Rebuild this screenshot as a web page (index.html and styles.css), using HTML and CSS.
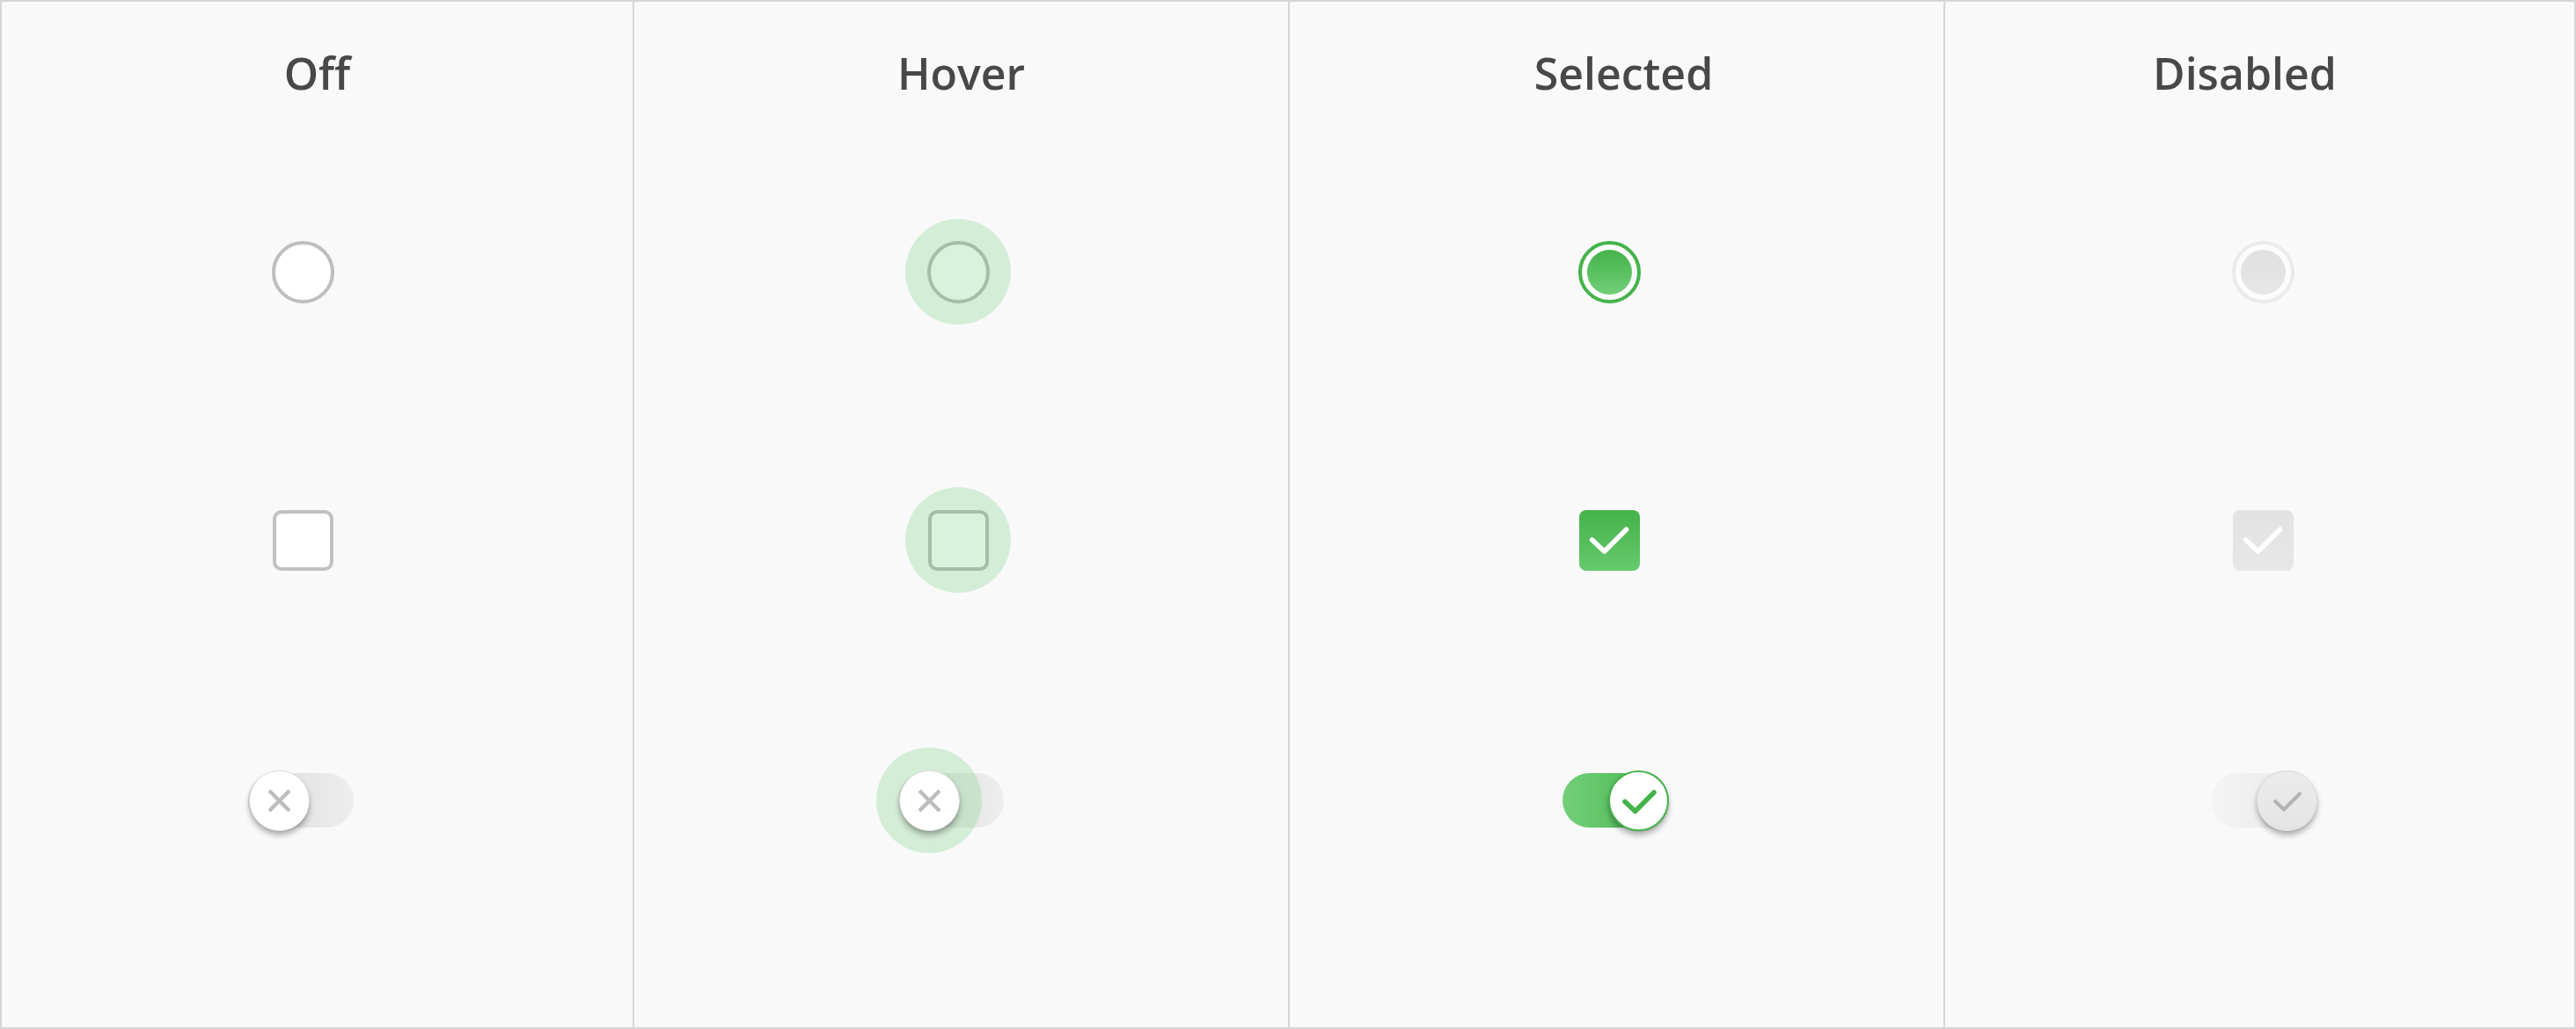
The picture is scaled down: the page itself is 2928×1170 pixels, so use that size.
FILE: index.html
```html
<!DOCTYPE html>
<html lang="en">
<head>
<meta charset="utf-8">
<title>Selection controls</title>
<link rel="stylesheet" href="styles.css">
</head>
<body>
<div class="board">
  <section class="col col-off">
    <h2 class="title">Off</h2>
    <div class="stack">
      <div class="row row-radio"><span class="radio radio-off"></span></div>
      <div class="row row-check"><span class="check check-off"></span></div>
      <div class="row row-toggle">
        <span class="toggle toggle-off">
          <span class="knob knob-left">
            <svg viewBox="0 0 69 69" width="69" height="69"><path d="M23 23 L46 46 M46 23 L23 46" class="x-mark"/></svg>
          </span>
        </span>
      </div>
    </div>
  </section>

  <section class="col col-hover">
    <h2 class="title">Hover</h2>
    <div class="stack">
      <div class="row row-radio"><span class="halo"><span class="radio radio-hover"></span></span></div>
      <div class="row row-check"><span class="halo"><span class="check check-hover"></span></span></div>
      <div class="row row-toggle">
        <span class="toggle toggle-off toggle-hover">
          <span class="toggle-halo"></span>
          <span class="knob knob-left">
            <svg viewBox="0 0 69 69" width="69" height="69"><path d="M23 23 L46 46 M46 23 L23 46" class="x-mark"/></svg>
          </span>
        </span>
      </div>
    </div>
  </section>

  <section class="col col-selected">
    <h2 class="title">Selected</h2>
    <div class="stack">
      <div class="row row-radio"><span class="radio radio-on"><span class="dot dot-on"></span></span></div>
      <div class="row row-check">
        <span class="check check-on">
          <svg viewBox="0 0 69 69" width="69" height="69"><polyline points="14.6,33.7 28.6,47 53.6,22" class="tick tick-white"/></svg>
        </span>
      </div>
      <div class="row row-toggle">
        <span class="toggle toggle-on">
          <span class="knob knob-right knob-on">
            <svg viewBox="0 0 69 69" width="69" height="69"><polyline points="19,35.5 30.6,46.5 52,25" class="tick tick-green"/></svg>
          </span>
        </span>
      </div>
    </div>
  </section>

  <section class="col col-disabled">
    <h2 class="title">Disabled</h2>
    <div class="stack">
      <div class="row row-radio"><span class="radio radio-disabled"><span class="dot dot-disabled"></span></span></div>
      <div class="row row-check">
        <span class="check check-disabled">
          <svg viewBox="0 0 69 69" width="69" height="69"><polyline points="14.6,33.7 28.6,47 53.6,22" class="tick tick-white"/></svg>
        </span>
      </div>
      <div class="row row-toggle">
        <span class="toggle toggle-disabled">
          <span class="knob knob-right knob-disabled">
            <svg viewBox="0 0 69 69" width="69" height="69"><polyline points="21,35 31,44.5 49,26.5" class="tick tick-gray"/></svg>
          </span>
        </span>
      </div>
    </div>
  </section>
</div>
</body>
</html>
```

FILE: styles.css
```css
html, body {
  margin: 0;
  padding: 0;
  background: #f9f9f9;
}

.board {
  box-sizing: border-box;
  width: 2928px;
  height: 1170px;
  border: 2px solid #d6d6d6;
  display: grid;
  grid-template-columns: 717px 745px 745px 717px;
  background: #f9f9f9;
}

.col {
  box-sizing: border-box;
  padding-top: 29px;
  display: flex;
  flex-direction: column;
}

.col + .col {
  border-left: 2px solid #d6d6d6;
}

.title {
  margin: 0;
  font-family: "Open Sans", "Noto Sans", sans-serif;
  font-weight: 600;
  font-size: 50px;
  line-height: 104px;
  height: 104px;
  text-align: center;
  color: #484848;
}

.col-selected .title { padding-left: 16px; }
.col-disabled .title { padding-right: 34px; }

.stack {
  display: flex;
  flex-direction: column;
}

.col-off .stack { padding-right: 32px; }
.col-hover .stack { padding-right: 7px; }
.col-selected .stack { padding-right: 16px; }
.col-disabled .stack { padding-left: 8px; }

.row {
  height: 120px;
  display: flex;
  align-items: center;
  justify-content: center;
}

.row-radio { margin-top: 114px; }
.row-check { margin-top: 185px; }
.row-toggle { margin-top: 176px; }

.col-off .row-toggle .toggle { margin-right: 5px; }
.col-hover .row-toggle .toggle { margin-right: 16px; }
.col-selected .row-toggle .toggle { margin-left: 13px; }

/* halo */
.halo {
  width: 120px;
  height: 120px;
  border-radius: 50%;
  background: #d4edd7;
  display: flex;
  align-items: center;
  justify-content: center;
}

/* radios */
.radio {
  box-sizing: border-box;
  width: 71px;
  height: 71px;
  border-radius: 50%;
  display: flex;
  align-items: center;
  justify-content: center;
}

.radio-off {
  border: 4px solid #bebebe;
  background: #ffffff;
}

.radio-hover {
  border: 4px solid #a2c0a5;
  background: #d9f2dd;
}

.radio-on {
  border: 4px solid #44b34a;
  background: #ffffff;
}

.radio-disabled {
  border: 4px solid #ebebeb;
  background: #fcfcfc;
}

.dot {
  width: 51px;
  height: 51px;
  border-radius: 50%;
}

.dot-on {
  background: linear-gradient(180deg, #45b34b 0%, #5cc263 55%, #72cf79 100%);
}

.dot-disabled {
  background: linear-gradient(180deg, #e0e0e0 0%, #e6e6e6 100%);
}

/* checkboxes */
.check {
  box-sizing: border-box;
  width: 69px;
  height: 69px;
  border-radius: 10px;
  display: block;
}

.check svg {
  display: block;
}

.check-off {
  border: 4px solid #c1c1c1;
  background: #ffffff;
}

.check-hover {
  border: 4px solid #a2c0a5;
  background: #d9f2dd;
}

.check-on {
  border-radius: 8px;
  background: linear-gradient(180deg, #45b34b 0%, #55bd5b 50%, #66ca6d 100%);
}

.check-disabled {
  border-radius: 8px;
  background: linear-gradient(180deg, #e2e2e2 0%, #e7e7e7 100%);
}

.tick {
  fill: none;
  stroke-linecap: round;
  stroke-linejoin: round;
}

.tick-white {
  stroke: #ffffff;
  stroke-width: 5.5;
}

.tick-green {
  stroke: #45b34b;
  stroke-width: 5.5;
}

.tick-gray {
  stroke: #b3b3b3;
  stroke-width: 4;
}

.x-mark {
  fill: none;
  stroke: #bdbdbd;
  stroke-width: 4.5;
}

/* toggles */
.toggle {
  position: relative;
  display: block;
  width: 120px;
  height: 62px;
  border-radius: 31px;
}

.toggle-off {
  background: linear-gradient(90deg, #dcdcdc 0%, #e6e6e6 60%, #eeeeee 100%);
}

.toggle-on {
  background: linear-gradient(90deg, #72cf79 0%, #5cc263 50%, #45b34b 100%);
}

.toggle-disabled {
  background: linear-gradient(90deg, #f4f4f4 0%, #ededed 60%, #e6e6e6 100%);
}

.toggle-halo {
  position: absolute;
  left: -25px;
  top: -29px;
  width: 120px;
  height: 120px;
  border-radius: 50%;
  background: rgba(146, 216, 154, 0.36);
}

.knob {
  position: absolute;
  top: -3.5px;
  box-sizing: border-box;
  width: 69px;
  height: 69px;
  border-radius: 50%;
  background: #ffffff;
  border: 1px solid #e2e2e2;
  box-shadow: 0 5px 6px rgba(0, 0, 0, 0.28), 0 1px 2px rgba(0, 0, 0, 0.12);
  overflow: hidden;
}

.knob svg {
  display: block;
  margin: -1px;
}

.knob-left { left: 1px; }
.knob-right { right: -1px; }

.knob-on {
  border: 2px solid #45b34b;
}

.knob-on svg {
  margin: -2px;
}

.knob-disabled {
  background: linear-gradient(180deg, #ececec 0%, #e4e4e4 100%);
  border: 1px solid #dadada;
}
```
